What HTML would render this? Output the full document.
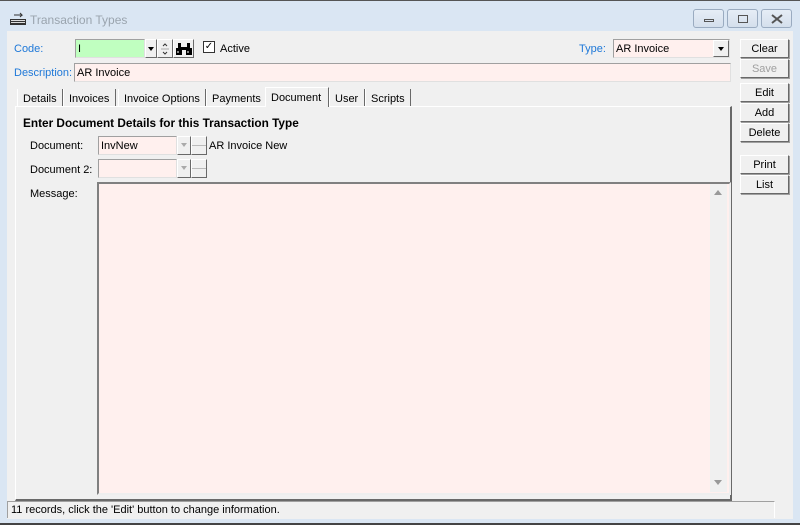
<!DOCTYPE html>
<html><head><style>
*{box-sizing:border-box;margin:0;padding:0}
body{width:800px;height:525px;overflow:hidden;background:#dae6f3;font-family:"Liberation Sans",sans-serif;font-size:11px;color:#000;position:relative}
.a{position:absolute}
.client{left:7px;top:31px;width:786px;height:488px;background:#f0f0f0}
.lbl{position:absolute;line-height:14px}
.blue{color:#1e78d8}
.inp{position:absolute;background:#fff0ee;border:1px solid #a0a0a0;border-right-color:#e0e0e0;border-bottom-color:#e0e0e0;padding-left:2px;line-height:18px}
.btn{position:absolute;left:740px;width:49px;height:19px;background:#f0f0f0;border:1px solid #fff;border-right-color:#696969;border-bottom-color:#696969;box-shadow:1px 1px 0 #a0a0a0;text-align:center;line-height:19px;font-size:11px}
.tab{position:absolute;top:89px;height:17px;border-left:1px solid #fff;border-right:1px solid #696969;line-height:20px;padding-left:5px}
.wb{position:absolute;top:9px;width:31px;height:19px;border:1px solid #9aabc0;border-radius:3px;background:linear-gradient(#e6edf6,#d4dfec)}
.ab{position:absolute;width:12px;height:18px;background:#f0f0f0;border:1px solid #fff;border-right-color:#696969;border-bottom-color:#696969}
</style></head><body>
<div class="a" style="left:0;top:0;width:800px;height:1px;background:#555"></div>
<div class="a" style="left:0;top:523px;width:800px;height:2px;background:#444"></div>
<svg class="a" style="left:9px;top:12px" width="18" height="14"><rect x="1" y="7" width="16" height="6" fill="#333"/><rect x="2" y="8" width="14" height="1" fill="#ddd"/><rect x="2" y="10" width="14" height="1" fill="#ddd"/><path d="M5 3h8l-2-2M13 3l-2 2" stroke="#333" fill="none"/></svg>
<div class="lbl" style="left:30px;top:13px;font-size:12px;color:#9aa4ae">Transaction Types</div>
<div class="wb" style="left:693px"><div class="a" style="left:10px;top:9px;width:10px;height:3px;border:1px solid #555"></div></div>
<div class="wb" style="left:727px"><div class="a" style="left:10px;top:5px;width:10px;height:8px;border:1px solid #555"></div></div>
<div class="wb" style="left:761px"><svg class="a" style="left:9px;top:4px" width="12" height="10"><path d="M1 1l10 8M11 1l-10 8" stroke="#555" stroke-width="2"/></svg></div>
<div class="a client"></div>

<div class="lbl blue" style="left:14px;top:42px">Code:</div>
<div class="inp" style="left:75px;top:39px;width:70px;height:19px;background:#c0ffc0">I</div>
<div class="ab" style="left:145px;top:39px;height:19px"><div class="a" style="left:2px;top:7px;border:3px solid transparent;border-top:4px solid #000"></div></div>
<div class="ab" style="left:157px;top:39px;height:19px;width:16px"><svg class="a" style="left:3px;top:2px" width="9" height="14"><path d="M2 4l2-2 2 2M2 10l2 2 2-2" stroke="#333" fill="none"/><path d="M0 7h8" stroke="#aaa"/></svg></div>
<div class="ab" style="left:173px;top:39px;height:19px;width:21px"><svg class="a" style="left:2px;top:3px" width="16" height="12"><rect x="0" y="5" width="6" height="7" fill="#000"/><rect x="10" y="5" width="6" height="7" fill="#000"/><rect x="2" y="0" width="3" height="6" fill="#000"/><rect x="11" y="0" width="3" height="6" fill="#000"/><rect x="5" y="4" width="6" height="3" fill="#000"/><rect x="1" y="8" width="2" height="2" fill="#888"/><rect x="11" y="8" width="2" height="2" fill="#888"/></svg></div>
<div class="a" style="left:203px;top:41px;width:12px;height:12px;border:1px solid #333;background:#fff;font-size:10px;line-height:10px;text-align:center">✓</div>
<div class="lbl" style="left:220px;top:42px">Active</div>

<div class="lbl blue" style="left:579px;top:42px">Type:</div>
<div class="inp" style="left:613px;top:39px;width:117px;height:19px">AR Invoice</div>
<div class="ab" style="left:713px;top:40px;width:16px;height:17px"><div class="a" style="left:4px;top:6px;border:3px solid transparent;border-top:4px solid #000"></div></div>

<div class="lbl blue" style="left:14px;top:66px">Description:</div>
<div class="inp" style="left:74px;top:63px;width:657px;height:19px">AR Invoice</div>

<div class="a" style="left:15px;top:106px;width:717px;height:395px;border:1px solid #fff;border-right:2px solid #696969;border-bottom:2px solid #696969"></div>
<div class="tab" style="left:17px;width:46px">Details</div>
<div class="tab" style="left:63px;width:53px">Invoices</div>
<div class="tab" style="left:118px;width:88px">Invoice Options</div>
<div class="tab" style="left:206px;width:60px">Payments</div>
<div class="tab" style="left:265px;width:64px;top:87px;height:20px;background:#f0f0f0;border-top:1px solid #fff;line-height:20px">Document</div>
<div class="tab" style="left:329px;width:36px">User</div>
<div class="tab" style="left:365px;width:46px">Scripts</div>

<div class="lbl" style="left:23px;top:116px;font-weight:bold;font-size:11.8px">Enter Document Details for this Transaction Type</div>
<div class="lbl" style="left:30px;top:139px">Document:</div>
<div class="inp" style="left:98px;top:136px;width:79px;height:19px">InvNew</div>
<div class="ab" style="left:177px;top:136px;height:19px;width:14px"><div class="a" style="left:3px;top:6px;border:3px solid transparent;border-top:4px solid #aaa"></div></div>
<div class="ab" style="left:191px;top:136px;height:19px;width:16px"><div class="a" style="left:0;top:8px;width:14px;height:1px;background:#bbb"></div></div>
<div class="lbl" style="left:209px;top:139px">AR Invoice New</div>
<div class="lbl" style="left:30px;top:163px">Document 2:</div>
<div class="inp" style="left:98px;top:159px;width:79px;height:19px"></div>
<div class="ab" style="left:177px;top:159px;height:19px;width:14px"><div class="a" style="left:3px;top:6px;border:3px solid transparent;border-top:4px solid #aaa"></div></div>
<div class="ab" style="left:191px;top:159px;height:19px;width:16px"><div class="a" style="left:0;top:8px;width:14px;height:1px;background:#bbb"></div></div>
<div class="lbl" style="left:30px;top:187px">Message:</div>
<div class="a" style="left:97px;top:182px;width:634px;height:313px;border:2px solid #808080;border-right-color:#eee;border-bottom-color:#eee;background:#fff0ee"></div>
<div class="a" style="left:710px;top:184px;width:17px;height:308px;background:#f0f0f0"></div>
<div class="a" style="left:714px;top:190px;border:4px solid transparent;border-bottom:5px solid #999;border-top:0"></div>
<div class="a" style="left:714px;top:480px;border:4px solid transparent;border-top:5px solid #999;border-bottom:0"></div>

<div class="btn" style="top:39px">Clear</div>
<div class="btn" style="top:59px;color:#a0a0a0">Save</div>
<div class="btn" style="top:83px">Edit</div>
<div class="btn" style="top:103px">Add</div>
<div class="btn" style="top:123px">Delete</div>
<div class="btn" style="top:155px">Print</div>
<div class="btn" style="top:175px">List</div>

<div class="a" style="left:7px;top:501px;width:768px;height:17px;border-top:1px solid #a0a0a0;border-left:1px solid #a0a0a0;border-right:1px solid #fff;line-height:17px;padding-left:3px">11 records, click the 'Edit' button to change information.</div>
</body></html>
